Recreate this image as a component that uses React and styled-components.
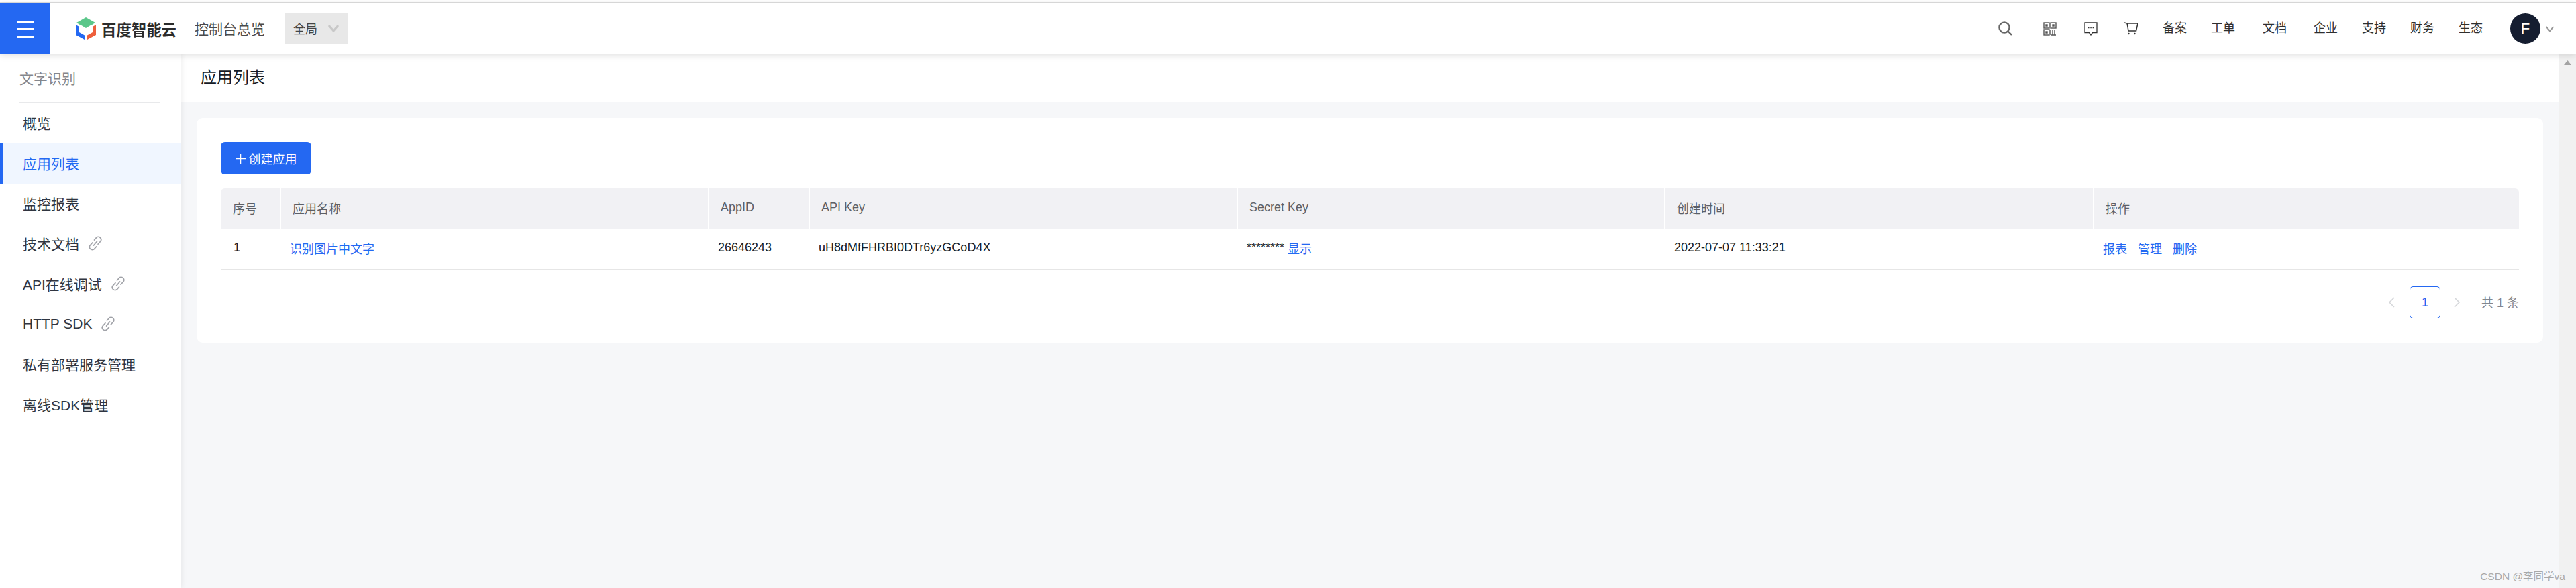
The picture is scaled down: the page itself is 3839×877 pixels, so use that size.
import React from 'react'
import styled, { createGlobalStyle } from 'styled-components'

const GlobalStyle = createGlobalStyle`
  html, body {
    margin: 0;
    padding: 0;
    background: #fff;
  }
  body {
    font-family: "Liberation Sans", "Noto Sans CJK SC", sans-serif;
    font-size: 18px;
    color: #151b26;
  }
  * {
    box-sizing: border-box;
  }
`

const Page = styled.div`
  width: 3839px;
  height: 877px;
  display: flex;
  flex-direction: column;
  overflow: hidden;
  position: relative;
`

const TopStrip = styled.div`
  height: 5px;
  flex: none;
  background: #fff;
  border-bottom: 2px solid #dedede;
`

const Header = styled.header`
  height: 75px;
  flex: none;
  display: flex;
  align-items: center;
  padding-right: 32px;
  background: #fff;
  box-shadow: 0 2px 10px rgba(0, 0, 0, 0.14);
  position: relative;
  z-index: 2;
`

const Burger = styled.div`
  width: 74px;
  height: 75px;
  flex: none;
  background: #2468f2;
  display: flex;
  flex-direction: column;
  justify-content: center;
  align-items: center;
  gap: 8px;
  padding-top: 1px;

  span {
    display: block;
    width: 25px;
    height: 3px;
    background: #fff;
  }
`

const Brand = styled.div`
  display: flex;
  align-items: center;
  margin-left: 39px;
  gap: 8px;
`

const BrandName = styled.span`
  font-size: 22.4px;
  font-weight: 700;
  color: #2b2b2b;
  white-space: nowrap;
`

const ConsoleLink = styled.span`
  margin-left: 27px;
  padding-bottom: 2px;
  font-size: 21px;
  color: #4a4a4a;
  white-space: nowrap;
`

const RegionSelect = styled.div`
  margin-left: 30px;
  width: 93px;
  height: 45px;
  background: #e8e8e8;
  display: flex;
  align-items: center;
  padding: 0 0 2px 12px;
  font-size: 18px;
  color: #444;

  svg {
    margin-left: 15px;
  }
`

const HeaderRight = styled.div`
  margin-left: auto;
  display: flex;
  align-items: center;
`

const HeaderIcon = styled.svg`
  display: block;
  flex: none;
  margin-right: ${p => p.$after}px;
`

const NavLink = styled.span`
  font-size: 18px;
  line-height: 24px;
  padding-bottom: 2px;
  color: #2f2f2f;
  margin-right: ${p => p.$after || 36}px;
  white-space: nowrap;
`

const Avatar = styled.div`
  width: 45px;
  height: 45px;
  border-radius: 50%;
  background: #151d30;
  color: #fff;
  font-size: 22px;
  display: flex;
  align-items: center;
  justify-content: center;
  margin-left: 5px;
  margin-right: 7px;
`

const Body = styled.div`
  flex: 1;
  min-height: 0;
  display: flex;
`

const Sidebar = styled.aside`
  width: 269px;
  flex: none;
  background: #fff;
  box-shadow: 2px 0 8px rgba(0, 0, 0, 0.07);
  position: relative;
  z-index: 1;
`

const SideTitle = styled.div`
  margin: 0 30px 0 29px;
  height: 74px;
  display: flex;
  align-items: center;
  font-size: 21px;
  color: #84868c;
  border-bottom: 2px solid #e8e9eb;
`

const SideItem = styled.div`
  height: 60px;
  display: flex;
  align-items: center;
  gap: 14px;
  padding-left: ${p => (p.$active ? '29px' : '34px')};
  padding-bottom: 3px;
  font-size: 21px;
  color: ${p => (p.$active ? '#2468f2' : '#303540')};
  background: ${p => (p.$active ? '#f0f6ff' : 'transparent')};
  border-left: ${p => (p.$active ? '5px solid #2468f2' : 'none')};
  white-space: nowrap;

  svg {
    flex: none;
  }
`

const Main = styled.main`
  flex: 1;
  min-width: 0;
  background: #f6f7f9;
`

const TitleBar = styled.div`
  height: 72px;
  background: #fff;
  display: flex;
  align-items: center;
  padding: 0 0 5px 30px;
  font-size: 24px;
  color: #151b26;
`

const Card = styled.section`
  margin: 24px 24px 0;
  height: 335px;
  background: #fff;
  border-radius: 9px;
  padding: 36px 36px 0;
`

const CreateButton = styled.div`
  width: 135px;
  height: 48px;
  background: #2468f2;
  border-radius: 6px;
  color: #fff;
  font-size: 18px;
  display: flex;
  align-items: center;
  justify-content: center;
  gap: 5px;
`

const Table = styled.div`
  margin-top: 21px;
  display: grid;
  grid-template-columns: 88px 638px 150px 638px 637px 639px 635px;
  border-bottom: 2px solid #e6e6e6;
`

const HeadCell = styled.div`
  height: 60px;
  background: #f1f1f4;
  color: #5c5f66;
  font-size: 18px;
  display: flex;
  align-items: center;
  padding-left: ${p => (p.$first ? '18px' : '17px')};
  padding-bottom: 3px;
  border-left: ${p => (p.$first ? 'none' : '2px solid #fff')};
  border-top-left-radius: ${p => (p.$first ? '6px' : '0')};
  border-top-right-radius: ${p => (p.$last ? '6px' : '0')};
`

const Cell = styled.div`
  height: 60px;
  font-size: 18px;
  color: #151b26;
  display: flex;
  align-items: center;
  padding-left: ${p => (p.$first ? '19px' : '15px')};
  padding-bottom: 3px;
  white-space: nowrap;
`

const TextLink = styled.span`
  color: #2468f2;
  margin-left: ${p => p.$before || 0}px;
`

const Pager = styled.div`
  margin-top: 24px;
  display: flex;
  align-items: center;
  justify-content: flex-end;
`

const PageNumber = styled.div`
  width: 46px;
  height: 48px;
  border: 1px solid #2468f2;
  border-radius: 5px;
  color: #2468f2;
  font-size: 18px;
  display: flex;
  align-items: center;
  justify-content: center;
  margin: 0 20px 0 22px;
`

const PagerTotal = styled.span`
  margin-left: 31px;
  padding-bottom: 2px;
  color: #84868c;
  font-size: 18px;
  white-space: nowrap;
`

const ScrollTrack = styled.div`
  width: 25px;
  flex: none;
  background: #f1f1f1;
  padding: 10px 0 0 7px;

  svg {
    display: block;
  }
`

const Watermark = styled.div`
  position: absolute;
  right: 16px;
  bottom: 8px;
  font-size: 15.5px;
  color: #a8a8a8;
  white-space: nowrap;
`

const Logo = () => (
  <svg width="30" height="33" viewBox="0 0 30 33">
    <path d="M15 0 L29 8 L24 11 L15 6 L6 11 L1 8 Z" fill="#5bc78a" />
    <path d="M15 4 L25 10 L15 16 L5 10 Z" fill="#5bc78a" />
    <path d="M0 11 L5 14 L5 22 L13 26.5 L13 33 L0 26 Z" fill="#2468f2" />
    <path d="M30 11 L25 14 L25 22 L17 26.5 L17 33 L30 26 Z" fill="#ee5f3c" />
  </svg>
)

const Chevron = ({ size = 18, color = '#c8c8c8', width = 3 }) => (
  <svg width={size} height={size} viewBox="0 0 18 18" fill="none">
    <path d="M2 5 L9 13 L16 5" stroke={color} strokeWidth={width} />
  </svg>
)

const ChainIcon = () => (
  <svg width="20" height="22" viewBox="0 0 20 22" fill="none" stroke="#a0a2a8" strokeWidth="1.7" strokeLinecap="round">
    <path d="M8.5 6 L11.5 2.6 C13 1 15.6 1 17.4 2.6 C19 4.2 19 6.6 17.6 8.2 L14 12.2" />
    <path d="M11.5 16 L8.5 19.4 C7 21 4.4 21 2.6 19.4 C1 17.8 1 15.4 2.4 13.8 L6 9.8" />
    <path d="M12.6 8 L7.6 14" />
  </svg>
)

const columns = ['序号', '应用名称', 'AppID', 'API Key', 'Secret Key', '创建时间', '操作']
const sideItems = [
  { label: '概览' },
  { label: '应用列表', active: true },
  { label: '监控报表' },
  { label: '技术文档', external: true },
  { label: 'API在线调试', external: true },
  { label: 'HTTP SDK', external: true },
  { label: '私有部署服务管理' },
  { label: '离线SDK管理' },
]
const navLinks = [
  { label: '备案' },
  { label: '工单', after: 41 },
  { label: '文档', after: 40 },
  { label: '企业' },
  { label: '支持' },
  { label: '财务' },
  { label: '生态', after: 36 },
]

export default function App() {
  return (
    <Page>
      <GlobalStyle />
      <TopStrip />
      <Header>
        <Burger>
          <span />
          <span />
          <span />
        </Burger>
        <Brand>
          <Logo />
          <BrandName>百度智能云</BrandName>
        </Brand>
        <ConsoleLink>控制台总览</ConsoleLink>
        <RegionSelect>
          全局
          <Chevron />
        </RegionSelect>
        <HeaderRight>
          <HeaderIcon $after={46} width="21" height="21" viewBox="0 0 21 21" fill="none" stroke="#666" strokeWidth="2.4">
            <circle cx="9" cy="9" r="7.6" />
            <path d="M14.5 14.5 L20 20" />
          </HeaderIcon>
          <HeaderIcon $after={41} width="20" height="20" viewBox="0 0 20 20" fill="none" stroke="#555" strokeWidth="1.4">
            <rect x="1" y="1" width="8" height="8" />
            <rect x="11" y="1" width="8" height="8" />
            <rect x="1" y="11" width="8" height="8" />
            <path d="M11 11 V19 M14 11 V19 M17 11 V19 M11 19 H19" />
            <rect x="4" y="4" width="2" height="2" fill="#555" />
            <rect x="14" y="4" width="2" height="2" fill="#555" />
            <rect x="4" y="14" width="2" height="2" fill="#555" />
          </HeaderIcon>
          <HeaderIcon $after={40} width="20" height="20" viewBox="0 0 20 20" fill="none" stroke="#333" strokeWidth="1.3">
            <path d="M1 1 H19 V15.5 H12.5 L10 19 L7.5 15.5 H1 Z" />
            <path d="M6 8.5 H7.5 M9.3 8.5 H10.8 M12.6 8.5 H14" strokeWidth="1.6" />
          </HeaderIcon>
          <HeaderIcon $after={37} width="20" height="19" viewBox="0 0 20 19" fill="none" stroke="#333" strokeWidth="1.5">
            <path d="M0 1 L4 2 H20 L17.5 13 H6 L4 2" />
            <circle cx="6.5" cy="17" r="1.2" fill="#333" stroke="none" />
            <circle cx="15.5" cy="17" r="1.2" fill="#333" stroke="none" />
          </HeaderIcon>
          {navLinks.map(link => (
            <NavLink key={link.label} $after={link.after}>{link.label}</NavLink>
          ))}
          <Avatar>F</Avatar>
          <Chevron size={14} color="#999" width={2.6} />
        </HeaderRight>
      </Header>
      <Body>
        <Sidebar>
          <SideTitle>文字识别</SideTitle>
          {sideItems.map(item => (
            <SideItem key={item.label} $active={item.active}>
              {item.label}
              {item.external && <ChainIcon />}
            </SideItem>
          ))}
        </Sidebar>
        <Main>
          <TitleBar>应用列表</TitleBar>
          <Card>
            <CreateButton>
              <svg width="15" height="15" viewBox="0 0 15 15" stroke="#fff" strokeWidth="1.5">
                <path d="M7.5 0 V15 M0 7.5 H15" />
              </svg>
              创建应用
            </CreateButton>
            <Table>
              {columns.map((col, i) => (
                <HeadCell key={col} $first={i === 0} $last={i === columns.length - 1}>{col}</HeadCell>
              ))}
              <Cell $first>1</Cell>
              <Cell><TextLink>识别图片中文字</TextLink></Cell>
              <Cell>26646243</Cell>
              <Cell>uH8dMfFHRBI0DTr6yzGCoD4X</Cell>
              <Cell>********<TextLink $before={5}>显示</TextLink></Cell>
              <Cell>2022-07-07 11:33:21</Cell>
              <Cell>
                <TextLink>报表</TextLink>
                <TextLink $before={16}>管理</TextLink>
                <TextLink $before={16}>删除</TextLink>
              </Cell>
            </Table>
            <Pager>
              <svg width="10" height="16" viewBox="0 0 10 16" fill="none" stroke="#d4d6d9" strokeWidth="1.6">
                <path d="M9 1 L2 8 L9 15" />
              </svg>
              <PageNumber>1</PageNumber>
              <svg width="10" height="16" viewBox="0 0 10 16" fill="none" stroke="#d4d6d9" strokeWidth="1.6">
                <path d="M1 1 L8 8 L1 15" />
              </svg>
              <PagerTotal>共 1 条</PagerTotal>
            </Pager>
          </Card>
        </Main>
        <ScrollTrack>
          <svg width="11" height="7" viewBox="0 0 11 7">
            <path d="M5.5 0 L11 7 H0 Z" fill="#a3a3a3" />
          </svg>
        </ScrollTrack>
      </Body>
      <Watermark>CSDN @李同学va</Watermark>
    </Page>
  )
}
